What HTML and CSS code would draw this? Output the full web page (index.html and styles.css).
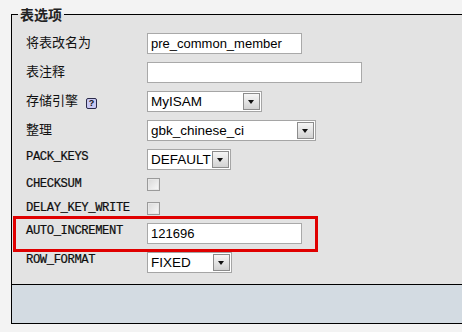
FILE: index.html
```html
<!DOCTYPE html>
<html lang="zh">
<head>
  <meta charset="UTF-8" />
  <title>表选项</title>
  <link rel="stylesheet" href="styles.css">
</head>
<body>
  <fieldset class="options">
    <legend>表选项</legend>
    <div class="rows">
      <!-- rename -->
      <div class="row">
        <label class="cn">将表改名为</label>
        <div class="input w155">pre_common_member</div>
      </div>
      <div class="row">
        <label class="cn">表注释</label>
        <div class="input w215"></div>
      </div>
      <div class="row">
        <label class="cn">存储引擎 <span class="help">?</span></label>
        <div class="select w115"><span class="val">MyISAM</span><span class="arrow"></span></div>
      </div>
      <div class="row">
        <label class="cn">整理</label>
        <div class="select w169"><span class="val">gbk_chinese_ci</span><span class="arrow"></span></div>
      </div>
      <div class="row">
        <label class="mono">PACK_KEYS</label>
        <div class="select w84"><span class="val">DEFAULT</span><span class="arrow"></span></div>
      </div>
      <div class="row check">
        <label class="mono">CHECKSUM</label>
        <span class="box"></span>
      </div>
      <div class="row check">
        <label class="mono">DELAY_KEY_WRITE</label>
        <span class="box"></span>
      </div>
      <div class="row marked">
        <label class="mono">AUTO_INCREMENT</label>
        <div class="input w155">121696</div>
      </div>
      <div class="row">
        <label class="mono">ROW_FORMAT</label>
        <div class="select w85"><span class="val">FIXED</span><span class="arrow"></span></div>
      </div>
    </div>
    <div class="footer"></div>
  </fieldset>
</body>
</html>
```

FILE: styles.css
```css
body {
  margin: 0;
  background: #f3f3f3;
  overflow: hidden;
  font-family: "Liberation Sans", Arial, sans-serif;
  color: #000;
}
.options {
  margin: 5px 0 0 11px;
  padding: 0;
  border: 1px solid #000;
  border-right: 0;
  background: #e3e3e3;
  min-width: 0;
}
.options legend {
  margin-left: 6px;
  padding: 0 2px;
  font-family: "Noto Sans CJK SC", sans-serif;
  font-size: 14px;
  font-weight: bold;
  line-height: 19px;
  color: #222;
}
.rows {
  padding: 5px 0 7px 14px;
}
.row {
  display: flex;
  align-items: flex-start;
  padding: 4px 0;
  position: relative;
}
.row.check {
  padding: 4px 0 7px;
}
.row.check + .row.check {
  padding-bottom: 4px;
}
.row label {
  width: 121px;
  flex: none;
  color: #111;
}
.cn {
  font-family: "Noto Sans CJK SC", sans-serif;
  font-size: 13px;
  line-height: 16px;
  padding-top: 1px;
}
.mono {
  font-family: "Liberation Mono", monospace;
  font-size: 12.2px;
  letter-spacing: -0.4px;
  line-height: 14px;
  padding-top: 1px;
  color: #000;
  -webkit-text-stroke: 0.2px #000;
}
.row.check .mono {
  padding-top: 0;
  line-height: 13px;
}
.help {
  display: inline-block;
  width: 9px;
  height: 9px;
  margin-left: 5px;
  border: 1px solid #2a2a4a;
  border-radius: 2px;
  background: #c9c9f2;
  font-family: "Liberation Sans", sans-serif;
  font-size: 9px;
  font-weight: bold;
  line-height: 9px;
  text-align: center;
  vertical-align: -1px;
}
.input {
  box-sizing: border-box;
  height: 21px;
  padding: 0 3px;
  border: 1px solid #a9a9a9;
  background: #fff;
  font-size: 13px;
  line-height: 19px;
}
.select {
  box-sizing: border-box;
  display: flex;
  align-items: center;
  height: 21px;
  padding: 0 1px 0 3px;
  border: 1px solid #a5a5a5;
  background: #fff;
  font-size: 13.5px;
}
.select .val {
  flex: 1;
  line-height: 19px;
}
.select .arrow {
  box-sizing: border-box;
  width: 17px;
  height: 17px;
  border: 1px solid #8c8c8c;
  background: linear-gradient(#f6f6f6, #d2d2d2);
  position: relative;
}
.select .arrow::after {
  content: "";
  position: absolute;
  left: 4px;
  top: 6px;
  border-left: 3.5px solid transparent;
  border-right: 3.5px solid transparent;
  border-top: 4px solid #111;
}
.w155 { width: 155px; }
.w215 { width: 215px; }
.w115 { width: 115px; }
.w169 { width: 169px; }
.w84 { width: 84px; }
.w85 { width: 85px; }
.box {
  box-sizing: border-box;
  width: 13px;
  height: 13px;
  border: 1px solid #9a9a9a;
  background: linear-gradient(135deg, #d8d8d8, #fafafa);
  box-shadow: inset 0 0 0 1px #e8e8e8;
}
/* red annotation frame */
.marked::after {
  content: "";
  position: absolute;
  left: -13px;
  top: -3px;
  width: 305px;
  height: 36px;
  box-sizing: border-box;
  border: 3px solid #e00000;
}
.footer {
  height: 38px;
  border-top: 1px solid #000;
  background: #d3dbe2;
}
```
